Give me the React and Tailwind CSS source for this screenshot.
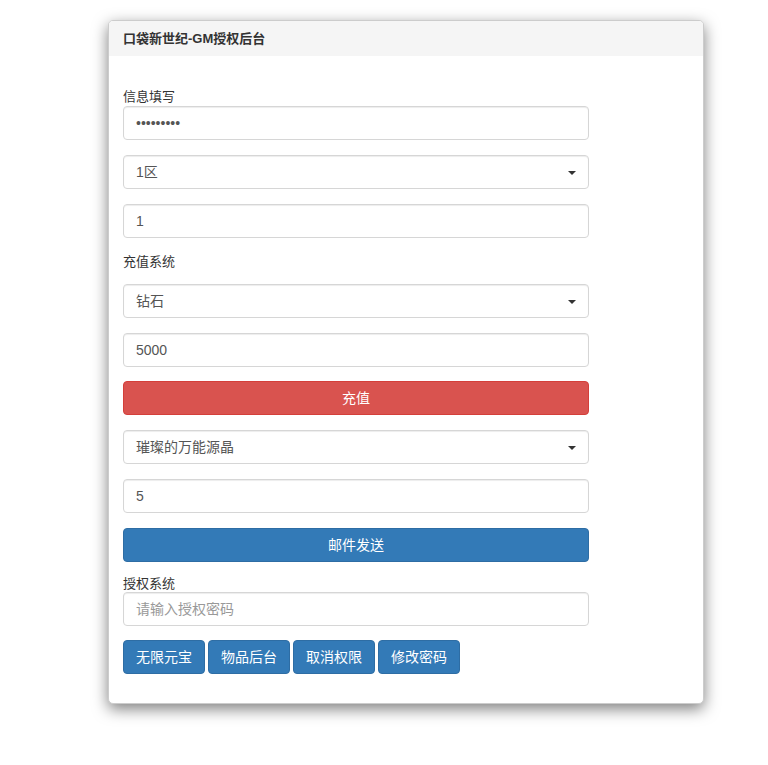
import { useState } from "react";

const font = { fontFamily: '"Liberation Sans", "Noto Sans CJK SC", sans-serif' };

function Caret() {
  return (
    <svg width="8" height="4" viewBox="0 0 8 4" className="absolute right-[12px] top-[15px]">
      <path d="M0 0 L8 0 L4 4 Z" fill="#333" />
    </svg>
  );
}

function SelectBox({ value }) {
  return (
    <div className="relative mb-[15px] h-[34px] w-[466px] rounded-[4px] border border-[#d6d6d6] bg-white px-[12px] text-[14px] leading-[32px] text-[#555] shadow-[inset_0_1px_1px_rgba(0,0,0,0.075)]">
      {value}
      <Caret />
    </div>
  );
}

function TextBox({ value, placeholder, type = "text", className = "mb-[15px]" }) {
  const [v, setV] = useState(value || "");
  return (
    <input
      type={type}
      value={v}
      placeholder={placeholder}
      onChange={(e) => setV(e.target.value)}
      className={`block h-[34px] w-[466px] rounded-[4px] border border-[#d6d6d6] bg-white px-[12px] text-[14px] text-[#555] placeholder:text-[#999] shadow-[inset_0_1px_1px_rgba(0,0,0,0.075)] outline-none ${className}`}
      style={font}
    />
  );
}

export default function App() {
  return (
    <div className="min-h-[765px] bg-white pt-[20px] pl-[108px]" style={font}>
      <div className="w-[596px] overflow-hidden rounded-[5px] border border-[#ccc] bg-white shadow-[0_5px_15px_rgba(0,0,0,0.5)]">
        <div className="h-[35px] bg-[#f5f5f5] px-[14px] text-[13px] font-bold leading-[35px] text-[#333]">
          口袋新世纪-GM授权后台
        </div>
        <div className="px-[14px] pt-[32px] pb-[29px]">
          <div className="h-[18px] text-[13px] leading-[18px] text-[#333]">信息填写</div>
          <TextBox type="password" value="123456789" />
          <SelectBox value="1区" />
          <TextBox value="1" />
          <div className="mb-[14px] h-[17px] text-[13px] leading-[17px] text-[#333]">充值系统</div>
          <SelectBox value="钻石" />
          <TextBox value="5000" className="mb-[14px]" />
          <button className="mb-[15px] block h-[34px] w-[466px] rounded-[4px] border border-[#d43f3a] bg-[#d9534f] text-[14px] text-white">
            充值
          </button>
          <SelectBox value="璀璨的万能源晶" />
          <TextBox value="5" />
          <button className="mb-[13px] block h-[34px] w-[466px] rounded-[4px] border border-[#2e6da4] bg-[#337ab7] text-[14px] text-white">
            邮件发送
          </button>
          <div className="h-[17px] text-[13px] leading-[17px] text-[#333]">授权系统</div>
          <TextBox placeholder="请输入授权密码" className="mb-[14px]" />
          <div className="flex gap-[3px]">
            {["无限元宝", "物品后台", "取消权限", "修改密码"].map((t) => (
              <button
                key={t}
                className="h-[34px] rounded-[4px] border border-[#2e6da4] bg-[#337ab7] px-[12px] text-[14px] text-white"
              >
                {t}
              </button>
            ))}
          </div>
        </div>
      </div>
    </div>
  );
}
